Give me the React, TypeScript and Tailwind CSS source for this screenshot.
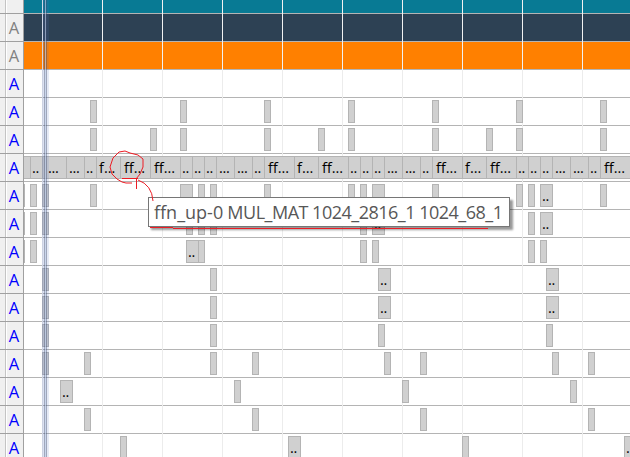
type Bar = [x: number, w?: number, label?: string];
type Row = { tone: string; fill?: string; bars: Bar[] };

const blue = "text-[#0000ff]";
const gray = "text-[#808080]";

const ops: Bar[] = [
  [18, 13], [30, 13, ".."], [42, 25, "..."], [66, 19, "..."], [84, 13, ".."], [96, 25, "f..."],
  [120, 31, "ff..."], [150, 31, "ff..."], [180, 13, ".."], [192, 13, ".."], [204, 13, ".."],
  [216, 19, "..."], [234, 19, "..."], [252, 13, ".."], [264, 31, "ff..."], [294, 25, "f..."],
  [318, 31, "ff..."], [348, 13, ".."], [360, 13, ".."], [372, 13, ".."], [384, 19, "..."],
  [402, 19, "..."], [420, 13, ".."], [432, 31, "ff..."], [462, 25, "f..."], [486, 31, "ff..."],
  [516, 13, ".."], [528, 13, ".."], [540, 13, ".."], [552, 19, "..."], [570, 19, "..."],
  [588, 13, ".."], [600, 31, "ff..."],
];

const rows: Row[] = [
  { tone: gray, fill: "bg-[#2d4154]", bars: [] },
  { tone: gray, fill: "bg-[#ff8000]", bars: [] },
  { tone: blue, bars: [] },
  { tone: blue, bars: [[90], [180], [264], [348], [432], [516], [600]] },
  { tone: blue, bars: [[90], [150], [180], [264], [318], [348], [432], [486], [516], [600]] },
  { tone: blue, bars: ops },
  { tone: blue, bars: [[18], [30], [42], [90], [180, 13], [198], [210], [264], [348], [360], [372, 13], [432], [516], [528], [540, 13, ".."], [600]] },
  { tone: blue, bars: [[18], [30], [42], [186], [198], [210], [360], [372, 13, ".."], [528], [540, 13, ".."]] },
  { tone: blue, bars: [[18], [30], [186, 13, ".."], [198], [360], [372], [528], [540]] },
  { tone: blue, bars: [[42], [210], [378, 13, ".."], [546, 13, ".."]] },
  { tone: blue, bars: [[42], [210], [378, 13, ".."], [546, 13, ".."]] },
  { tone: blue, bars: [[42], [210], [378], [546]] },
  { tone: blue, bars: [[42], [84], [210], [252], [384], [420], [552], [588]] },
  { tone: blue, bars: [[60, 13, ".."], [234], [402], [570]] },
  { tone: blue, bars: [[84], [252], [420], [588]] },
  { tone: blue, bars: [[120], [288, 13, ".."], [462], [624, 13, ".."]] },
];

const ticks = [42, 102, 162, 222, 282, 342, 402, 462, 522, 582];
const trackLeft = 24;

function Ticks({ strong }: { strong?: boolean }) {
  return (
    <>
      {ticks.map((x) => (
        <i key={x} className={`absolute top-0 -bottom-px w-px ${strong ? "bg-[#f2f2f2]" : "bg-[#ececec]"}`} style={{ left: x - trackLeft }} />
      ))}
    </>
  );
}

function Gutter({ tone }: { tone?: string }) {
  return (
    <div className="flex w-6 shrink-0 border-r border-b border-[#a0a0a0] bg-[#f0f0f0]">
      <div className="w-[7px] shrink-0 border-r border-white">
        <div className="h-full w-1.5 border-r border-[#c4c4c4]" />
      </div>
      {tone && <span className={`w-[14px] pt-[2px] text-center text-[16.5px] leading-6 ${tone}`}>A</span>}
    </div>
  );
}

function Block({ bar: [x, w = 7, label] }: { bar: Bar }) {
  const letters = label?.startsWith("f");
  const inset = letters ? (w > 25 ? "pl-[3px]" : "pl-[2px]") : w > 20 ? "pl-[5px]" : w > 13 ? "pl-[2px]" : "pl-px";
  return (
    <div
      className="absolute top-[2px] h-[23px] overflow-hidden border border-[#b4b4b4] bg-[#d0d0d0] text-[14.5px] leading-[21px] whitespace-nowrap text-black"
      style={{ left: x - trackLeft, width: w }}
    >
      {label && <span className={`${inset} ${letters ? "" : "tracking-[-0.3px]"}`}>{label}</span>}
    </div>
  );
}

export default function App() {
  return (
    <main className="relative h-[457px] w-[630px] overflow-hidden bg-white font-['Open_Sans','Noto_Sans',sans-serif]">
      <div className="flex h-[14px]">
        <Gutter />
        <div className="relative grow border-b border-[#b4b4b4] bg-[#087a94]">
          <Ticks strong />
        </div>
      </div>
      {rows.map((row, i) => (
        <div key={i} className="flex h-7">
          <Gutter tone={row.tone} />
          <div className={`relative grow border-b border-[#b4b4b4] ${row.fill ?? "bg-white"}`}>
            <Ticks strong={!!row.fill} />
            <div className="absolute inset-0 overflow-hidden">
              {row.bars.map((bar) => (
                <Block key={bar[0]} bar={bar} />
              ))}
            </div>
          </div>
        </div>
      ))}

      <div className="absolute inset-y-0 left-[42px] flex w-[7px]">
        <i className="w-0.5 bg-[#5070c0]/20" />
        <i className="w-px bg-[#405078]/50" />
        <i className="w-px bg-[#b4c4e4]/70" />
        <i className="w-px bg-[#405078]/50" />
        <i className="w-0.5 bg-[#5070c0]/15" />
      </div>

      <div className="absolute top-[197px] left-[148px] h-[30px] w-[362px] border border-[#767676] bg-white pl-[5px] text-[18px] leading-[28px] whitespace-nowrap text-[#575757] shadow-[3px_3px_2px_rgba(0,0,0,0.4)]">
        ffn_up-0<span className="tracking-[-0.5px]"> MUL_MAT 1024_2816_1 1024_68_1</span>
      </div>

      <svg className="absolute inset-0" width="630" height="457" fill="none" stroke="#ed1c24">
        <path d="M143 159 L138 155 L130 153 L125 151 L119 152 L113 158 L110 167 L112 174 L117 179 L122 182 L126 183 H132 M143 159 V167 L140 174 L136 179 M122 178.5 H138 M136.5 178 V189 M138 180 Q152 185 153 201" />
        <path d="M150 227.5 H173 M173 228.5 H488" />
      </svg>
    </main>
  );
}
